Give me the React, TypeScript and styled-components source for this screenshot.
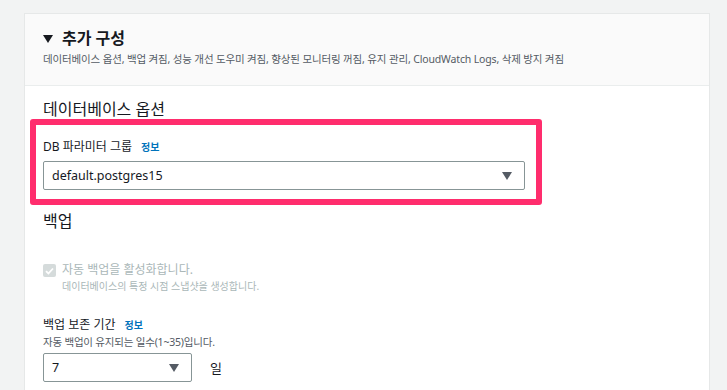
import React from "react";
import styled, { createGlobalStyle } from "styled-components";

const Global = createGlobalStyle`
  html, body { margin: 0; padding: 0; background: #f2f3f3; }
  body { font-family: "Noto Sans", "Noto Sans CJK KR", sans-serif; color: #16191f; }
  * { box-sizing: border-box; }
`;

const Page = styled.div`
  width: 727px;
  height: 390px;
  overflow: hidden;
  padding: 13px 17px 0 24px;
`;

const Card = styled.section`
  background: #fff;
  border: 1px solid #e6e8e8;
  border-bottom: none;
  height: 400px;
`;

const Header = styled.header`
  background: #fafafa;
  border-bottom: 1px solid #eaeded;
  height: 72px;
  padding: 12px 18px 0 18px;
`;

const TitleRow = styled.div`
  display: flex;
  align-items: center;
  gap: 9px;
  height: 24px;
`;

const Caret = styled.span`
  width: 0;
  height: 0;
  border-left: 5px solid transparent;
  border-right: 5px solid transparent;
  border-top: 8px solid #16191f;
  margin-top: 1px;
`;

const Title = styled.h2`
  margin: 0;
  font-size: 16px;
  font-weight: 700;
  line-height: 24px;
`;

const Subtitle = styled.div`
  font-size: 10.5px;
  color: #545b64;
  line-height: 16px;
  margin-top: 1px;
  letter-spacing: -0.15px;
`;

const Body = styled.div`
  padding: 11px 18px 0 18px;
`;

const SectionTitle = styled.h3`
  margin: 0;
  font-size: 16px;
  font-weight: 400;
  line-height: 24px;
`;

const Highlight = styled.div`
  margin: -2px 0 0 -13px;
  width: 512px;
  border: 6px solid #ff2d6d;
  border-radius: 3px;
  padding: 13px 10px 9px 7px;
`;

const FieldLabel = styled.div`
  display: flex;
  align-items: baseline;
  gap: 9px;
  font-size: 12px;
  line-height: 18px;
  color: #16191f;
`;

const LabelGap = styled.div`
  height: 5px;
`;

const Info = styled.a`
  color: #0073bb;
  font-size: 10px;
  font-weight: 700;
  text-decoration: none;
`;

const Select = styled.div<{ $w: number }>`
  width: ${(p) => p.$w}px;
  height: 29px;
  border: 1px solid #879596;
  border-radius: 2px;
  display: flex;
  align-items: center;
  justify-content: space-between;
  padding: 0 12px 0 8px;
  font-size: 12.5px;
  color: #16191f;
  background: #fff;
`;

const Arrow = styled.span`
  width: 0;
  height: 0;
  border-left: 5px solid transparent;
  border-right: 5px solid transparent;
  border-top: 8px solid #545b64;
`;

const BackupTitle = styled(SectionTitle)`
  margin-top: 4px;
`;

const CheckRow = styled.div`
  display: flex;
  gap: 6px;
  margin-top: 28px;
`;

const Box = styled.span`
  width: 13px;
  height: 13px;
  border-radius: 2px;
  background: #d5dbdb;
  display: flex;
  align-items: center;
  justify-content: center;
  margin-top: 3px;
  flex: none;
`;

const CheckText = styled.div`
  display: flex;
  flex-direction: column;
`;

const CheckMain = styled.div`
  font-size: 12px;
  line-height: 18px;
  color: #aab7b8;
`;

const CheckSub = styled.div`
  font-size: 10px;
  line-height: 15px;
  color: #aab7b8;
`;

const Field = styled.div`
  margin-top: 22px;
`;

const Desc = styled.div`
  font-size: 10.5px;
  line-height: 17px;
  color: #545b64;
  margin-bottom: 2px;
  letter-spacing: -0.2px;
`;

const SelectRow = styled.div`
  display: flex;
  align-items: center;
  gap: 18px;
`;

const Unit = styled.span`
  font-size: 13px;
`;

export default function App() {
  return (
    <>
      <Global />
      <Page>
        <Card>
          <Header>
            <TitleRow>
              <Caret />
              <Title>추가 구성</Title>
            </TitleRow>
            <Subtitle>
              데이터베이스 옵션, 백업 켜짐, 성능 개선 도우미 켜짐, 향상된 모니터링 꺼짐, 유지 관리, CloudWatch Logs, 삭제 방지 켜짐
            </Subtitle>
          </Header>
          <Body>
            <SectionTitle>데이터베이스 옵션</SectionTitle>
            <Highlight>
              <FieldLabel>
                DB 파라미터 그룹 <Info href="#">정보</Info>
              </FieldLabel>
              <LabelGap />
              <Select $w={482}>
                default.postgres15
                <Arrow />
              </Select>
            </Highlight>
            <BackupTitle>백업</BackupTitle>
            <CheckRow>
              <Box>
                <svg width="9" height="8" viewBox="0 0 9 8">
                  <path d="M1 4.2 L3.4 6.5 L8 1.5" stroke="#fff" strokeWidth="1.8" fill="none" />
                </svg>
              </Box>
              <CheckText>
                <CheckMain>자동 백업을 활성화합니다.</CheckMain>
                <CheckSub>데이터베이스의 특정 시점 스냅샷을 생성합니다.</CheckSub>
              </CheckText>
            </CheckRow>
            <Field>
              <FieldLabel>
                백업 보존 기간 <Info href="#">정보</Info>
              </FieldLabel>
              <Desc>자동 백업이 유지되는 일수(1~35)입니다.</Desc>
              <SelectRow>
                <Select $w={149}>
                  7
                  <Arrow />
                </Select>
                <Unit>일</Unit>
              </SelectRow>
            </Field>
          </Body>
        </Card>
      </Page>
    </>
  );
}
